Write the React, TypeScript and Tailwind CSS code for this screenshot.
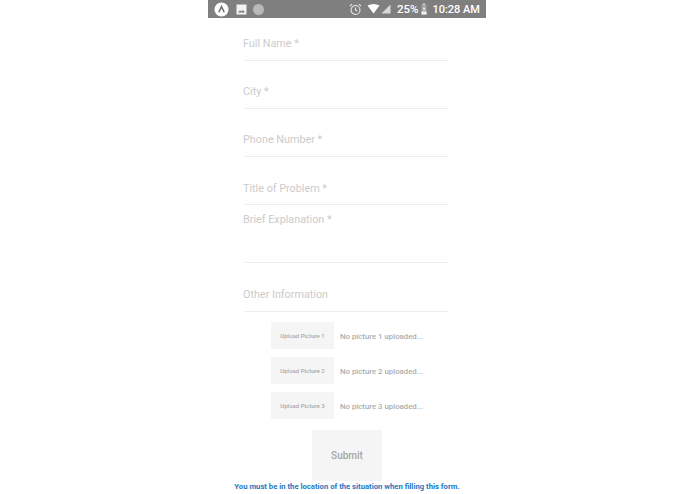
function StatusBar() {
  return (
    <div className="flex h-[18px] items-center justify-between bg-[#7f7f7f] pl-[6px] pr-[6px] text-white">
      <div className="flex items-center gap-[7px]">
        <svg width="15" height="15" viewBox="0 0 15 15">
          <circle cx="7.5" cy="7.5" r="7" fill="#fff" />
          <path d="M4.8 10.3 L7.5 4.6 L10.2 10.3" fill="none" stroke="#6f6f6f" strokeWidth="1.5" />
        </svg>
        <svg width="11" height="11" viewBox="0 0 11 11">
          <rect x="0.5" y="0.5" width="10" height="10" fill="#f2f2f2" />
          <path d="M2 8.5 L4 6.2 L5.4 7.6 L6.8 6 L9 8.5 Z" fill="#777" />
        </svg>
        <div className="ml-[-1px] h-[11px] w-[11px] rounded-full bg-[#b9b9b9]" />
      </div>
      <div className="flex items-center text-[11px] font-medium leading-none font-['Roboto',sans-serif]">
        <svg width="13" height="13" viewBox="0 0 13 13" fill="none" stroke="#e8e8e8" strokeWidth="1.1">
          <circle cx="6.5" cy="7" r="4.5" />
          <path d="M6.5 4.5 V7 L8.2 8" />
          <path d="M1 3 L3 1.2 M12 3 L10 1.2" />
        </svg>
        <svg className="ml-[5px]" width="13" height="10" viewBox="0 0 12 10">
          <path d="M0 1.6 Q6 -1.4 12 1.6 L6 9.5 Z" fill="#fff" />
        </svg>
        <svg className="ml-[1px]" width="10" height="10" viewBox="0 0 10 10">
          <path d="M9.5 0.5 V9.5 H0.5 Z" fill="#d8d8d8" />
        </svg>
        <span className="ml-[6px] pt-[2px] text-[11.5px]">25%</span>
        <svg className="ml-[3px]" width="6" height="12" viewBox="0 0 6 12">
          <rect x="0.5" y="1.5" width="5" height="10" fill="#a5a5a5" />
          <rect x="2" y="0.3" width="2" height="1.4" fill="#e0e0e0" />
          <rect x="0.5" y="8.5" width="5" height="3" fill="#f2f2f2" />
          <path d="M3.4 3 L2 6.2 H3 L2.6 8.4 L4.2 5.2 H3.1 Z" fill="#fff" />
        </svg>
        <span className="ml-[5px] pt-px">10:28 AM</span>
      </div>
    </div>
  );
}

function Field({ label, height, textTop }: { label: string; height: string; textTop: string }) {
  return (
    <div className={`${height} ${textTop} border-b border-[#ececec] ml-[37px] mr-[38px]`}>
      <div className="-ml-[2px] text-[10.8px] leading-[14px] text-[#cbcbcb]">{label}</div>
    </div>
  );
}

function UploadRow({ n }: { n: number }) {
  return (
    <div className="flex items-center">
      <div className="flex h-[27px] w-[63px] items-center justify-center bg-[#f5f5f6] text-[6px] font-medium text-[#a9a9a9]">
        Upload Picture {n}
      </div>
      <div className="ml-[6px] pt-[2px] text-[7.8px] font-medium text-[#adadad]">No picture {n} uploaded...</div>
    </div>
  );
}

export default function App() {
  return (
    <div className="flex h-[494px] w-[695px] justify-center overflow-hidden bg-white font-['Roboto',sans-serif]">
      <div className="ml-[-1px] h-[494px] w-[278px]">
        <StatusBar />
        <Field label="Full Name *" height="h-[43px]" textTop="pt-[19px]" />
        <Field label="City *" height="h-[48px]" textTop="pt-[24px]" />
        <Field label="Phone Number *" height="h-[48px]" textTop="pt-[24px]" />
        <Field label="Title of Problem *" height="h-[48px]" textTop="pt-[25px]" />
        <Field label="Brief Explanation *" height="h-[58px]" textTop="pt-[8px]" />
        <Field label="Other Information" height="h-[49px]" textTop="pt-[25px]" />
        <div className="ml-[63px] mt-[10px] flex flex-col gap-[8px]">
          <UploadRow n={1} />
          <UploadRow n={2} />
          <UploadRow n={3} />
        </div>
        <div className="ml-[104px] mt-[11px] flex h-[51px] w-[70px] items-center justify-center bg-[#f5f5f6] text-[10px] font-medium text-[#a5a5a5]">
          Submit
        </div>
        <div className="text-center text-[7.7px] leading-[12px] font-bold text-[#1f78c1] whitespace-nowrap">
          You must be in the location of the situation when filling this form.
        </div>
      </div>
    </div>
  );
}
